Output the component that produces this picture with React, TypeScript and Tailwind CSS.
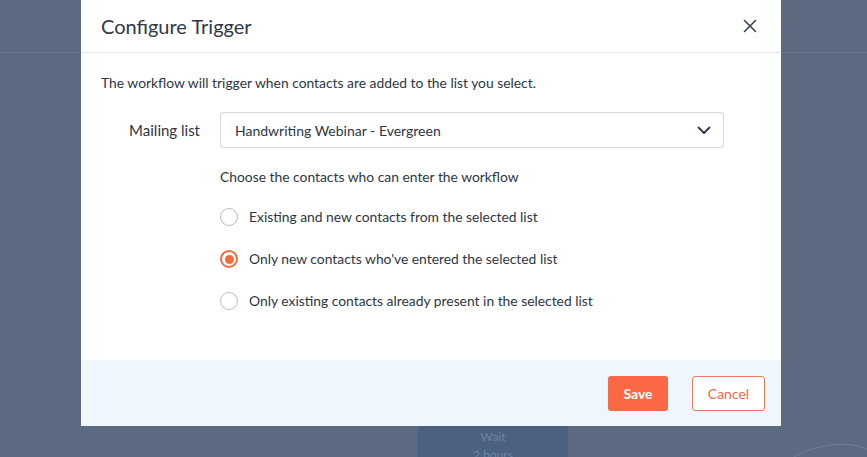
import { useState } from "react";

const OPTIONS = [
  "Existing and new contacts from the selected list",
  "Only new contacts who've entered the selected list",
  "Only existing contacts already present in the selected list",
];

export default function App() {
  const [choice, setChoice] = useState(1);

  return (
    <div
      className="relative h-[457px] w-full overflow-hidden bg-[#5b6a80]"
      style={{ fontFamily: "Lato, 'Open Sans', sans-serif" }}
    >
      {/* Backdrop: page behind the overlay */}
      <div className="absolute left-0 right-0 top-[52px] h-px bg-[#687790]" />
      <div className="absolute left-[418px] top-[420px] flex h-[60px] w-[150px] flex-col items-center bg-[#4c6180] pt-[8px] text-[12px] leading-[18px] text-[#6f82a0]">
        <span>Wait</span>
        <span>2 hours</span>
      </div>
      <svg className="absolute left-[780px] top-[430px]" width="90" height="30" viewBox="0 0 90 30" fill="none">
        <path d="M10 30 C 30 14, 70 10, 88 20" stroke="#6d7b91" strokeWidth="1.2" />
      </svg>

      {/* Modal */}
      <div className="relative ml-[81px] flex h-[426px] w-[700px] flex-col bg-white text-[#2d3644]">
        <div className="flex h-[53px] items-center justify-between border-b border-[#e6e8eb] pl-[20px] pr-[24px]">
          <h2 className="text-[20px] text-[#2f3847]">Configure Trigger</h2>
          <svg width="14" height="14" viewBox="0 0 14 14" fill="none" stroke="#3a4352" strokeWidth="1.6" strokeLinecap="round">
            <path d="M1.5 1.5 L12.5 12.5 M12.5 1.5 L1.5 12.5" />
          </svg>
        </div>

        <div className="flex-1 px-[20px] pt-[20px] text-[13.85px]">
          <p className="leading-[20px]">The workflow will trigger when contacts are added to the list you select.</p>

          <div className="mt-[19px] flex items-center">
            <label className="w-[119px] pr-[20px] text-right text-[15px]">Mailing list</label>
            <button className="flex h-[36px] w-[504px] items-center justify-between rounded-[3px] border border-[#d5d8dc] pl-[14px] pr-[12px] text-[14px]">
              <span>Handwriting Webinar - Evergreen</span>
              <svg width="14" height="9" viewBox="0 0 14 9" fill="none" stroke="#2d3644" strokeWidth="1.8" strokeLinecap="round" strokeLinejoin="round">
                <path d="M1.5 1.5 L7 7 L12.5 1.5" />
              </svg>
            </button>
          </div>

          <div className="ml-[119px] mt-[19px]">
            <p className="leading-[20px]">Choose the contacts who can enter the workflow</p>
            <div className="mt-[20px] flex flex-col gap-[22px]">
              {OPTIONS.map((label, i) => (
                <button key={label} onClick={() => setChoice(i)} className="flex h-[20px] items-center gap-[11px] text-left">
                  {choice === i ? (
                    <span className="flex h-[18px] w-[18px] items-center justify-center rounded-full border-2 border-[#f36a3e]">
                      <span className="h-[9px] w-[9px] rounded-full bg-[#f36a3e]" />
                    </span>
                  ) : (
                    <span className="h-[18px] w-[18px] rounded-full border-[1.5px] border-[#b9bcc1]" />
                  )}
                  <span>{label}</span>
                </button>
              ))}
            </div>
          </div>
        </div>

        <div className="flex h-[66px] items-center justify-end gap-[24px] bg-[#eff7fd] pr-[16px]">
          <button className="h-[35px] w-[60px] rounded-[3px] bg-[#fb6845] text-[14px] font-bold text-white">Save</button>
          <button className="h-[35px] w-[73px] rounded-[3px] border border-[#f07a5c] bg-white text-[14px] text-[#ec6a48]">Cancel</button>
        </div>
      </div>
    </div>
  );
}
